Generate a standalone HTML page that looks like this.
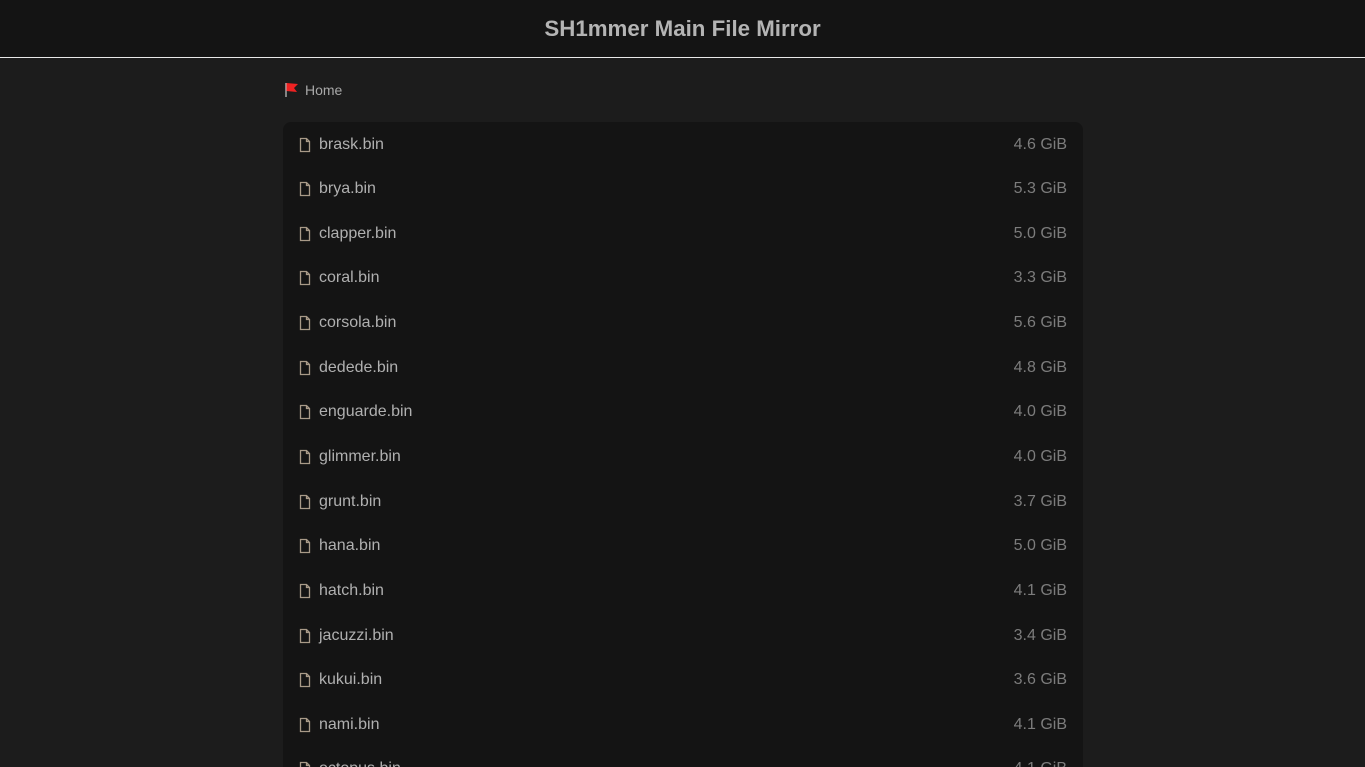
<!DOCTYPE html>
<html><head><meta charset="utf-8"><style>
html,body{margin:0;padding:0;background:#1c1c1c;width:1365px;height:767px;overflow:hidden;font-family:"Liberation Sans",sans-serif;}
.hdr{height:57px;background:#141414;border-bottom:1px solid #e8e8e8;text-align:center;}
.hdr h1{margin:0;font-size:22.3px;line-height:57px;color:#b4b4b4;font-weight:bold;}
.crumb{position:absolute;left:283px;top:81px;font-size:14px;color:#a8a8a8;line-height:18px;}
.crumb svg{vertical-align:-3px;margin-right:5px}
.card{position:absolute;left:283px;top:122px;width:800px;height:645px;background:#141414;border-radius:8px 8px 0 0;overflow:hidden}
.row{position:absolute;left:0;right:0;height:24px;display:flex;align-items:center;padding:0 16px;font-size:16px;color:#b0b0b0;box-sizing:border-box}
.row svg{margin-right:8px}
.row .s{margin-left:auto;color:#7c7c7c}
</style></head><body>
<div class="hdr"><h1>SH1mmer Main File Mirror</h1></div>
<div class="crumb"><svg width="17" height="17" viewBox="0 0 17 17"><line x1="3" y1="2" x2="3" y2="16" stroke="#bbb" stroke-width="1.3"/><path d="M3.5 2 L15 3 L11 7 L14 11 L3.5 10 Z" fill="#e22"/></svg>Home</div>
<div class="card" id="c"></div>
<script>
var f=[["brask","4.6"],["brya","5.3"],["clapper","5.0"],["coral","3.3"],["corsola","5.6"],["dedede","4.8"],["enguarde","4.0"],["glimmer","4.0"],["grunt","3.7"],["hana","5.0"],["hatch","4.1"],["jacuzzi","3.4"],["kukui","3.6"],["nami","4.1"],["octopus","4.1"]];
var h="";f.forEach(function(x,i){h+='<div class="row" style="top:'+(10.5+i*44.64)+'px"><svg width="12" height="16" viewBox="0 0 12 16"><path d="M1.5 1.5 H7.5 L10.5 4.5 V14.5 H1.5 Z M7.5 1.5 V4.5 H10.5" fill="none" stroke="#a89a88" stroke-width="1.3"/></svg>'+x[0]+'.bin<span class="s">'+x[1]+' GiB</span></div>'});
document.getElementById("c").innerHTML=h;
</script>
</body></html>
